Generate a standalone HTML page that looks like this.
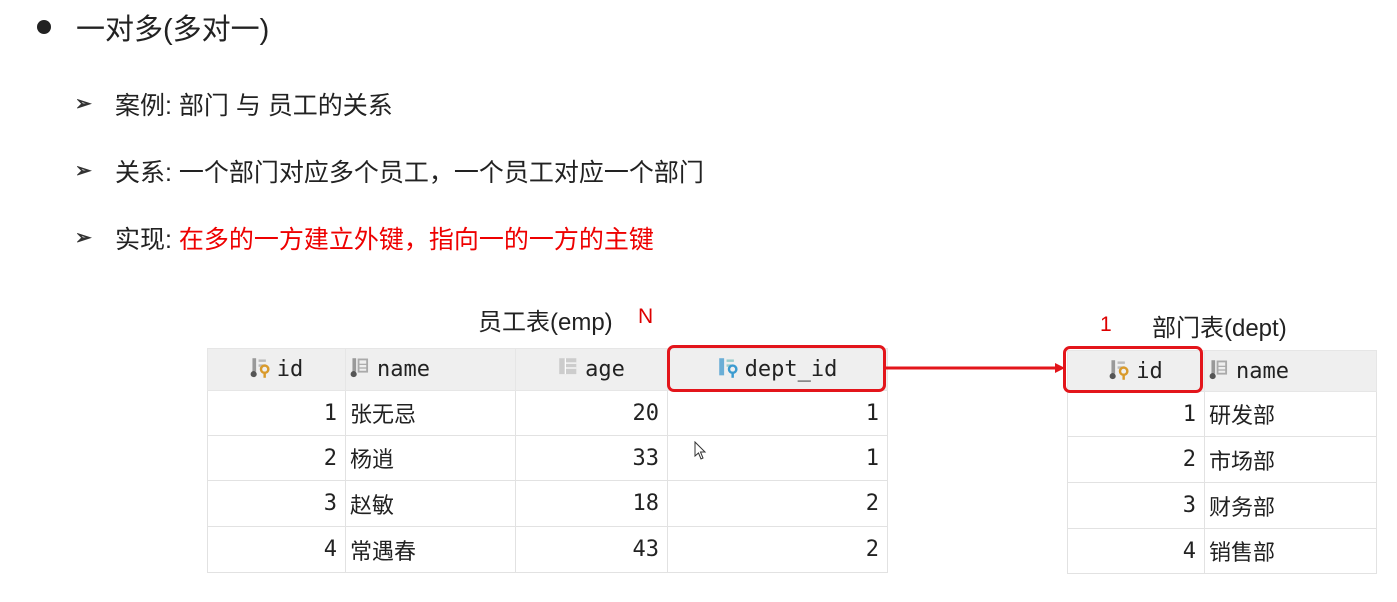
<!DOCTYPE html>
<html><head><meta charset="utf-8"><style>
body{margin:0;width:1397px;height:602px;background:#fff;position:relative;overflow:hidden;font-family:"Liberation Sans","Noto Sans CJK SC",sans-serif;color:#222}
.a{position:absolute;white-space:nowrap}
.dot{position:absolute;left:37px;top:20px;width:14px;height:14px;border-radius:50%;background:#222}
.t1{left:76px;top:6px;font-size:29px}
.sb{font-size:25px;left:115px}
.ar{font-size:20px;left:75px;color:#333;font-weight:bold}
table{position:absolute;border-collapse:collapse;table-layout:fixed;font-family:"DejaVu Sans Mono","Liberation Mono","Noto Sans CJK SC",monospace;font-size:22px;color:#222}
td{border:1px solid #e2e2e2;padding:0 8px 0 4px;overflow:hidden;white-space:nowrap}
th{background:#efefef;font-weight:normal;border:1px solid #e6e6e6;font-size:22px;white-space:nowrap;overflow:hidden}
td.n{text-align:right}
td.c{font-family:"Noto Sans CJK SC",sans-serif;font-size:22px;padding-left:4px}
.ic{display:inline-block;width:22px;height:22px;vertical-align:-3px;margin-right:5px}
.box{position:absolute;border:3px solid #e3151b;border-radius:7px}
</style></head><body>
<div class="dot"></div>
<div class="a t1">一对多(多对一)</div>
<div class="a ar" style="top:91px">➢</div><div class="a sb" style="top:86px">案例: 部门 与 员工的关系</div>
<div class="a ar" style="top:158px">➢</div><div class="a sb" style="top:153px">关系: 一个部门对应多个员工，一个员工对应一个部门</div>
<div class="a ar" style="top:225px">➢</div><div class="a sb" style="top:220px">实现: <span style="color:#e00">在多的一方建立外键，指向一的一方的主键</span></div>
<div class="a" style="left:478px;top:302px;font-size:24px">员工表(emp)</div>
<div class="a" style="left:638px;top:305px;font-size:21px;color:#d00">N</div>
<div class="a" style="left:1152px;top:308px;font-size:24px">部门表(dept)</div>
<div class="a" style="left:1100px;top:313px;font-size:21px;color:#d00">1</div>

<svg width="0" height="0" style="position:absolute"><defs>
<g id="k"><rect x="2" y="1" width="3" height="11" fill="#999"/><rect x="7" y="2" width="6" height="2" fill="#bbb"/><rect x="7" y="6" width="6" height="2" fill="#bbb"/><circle cx="3" cy="14" r="2.5" fill="#555"/><circle cx="12" cy="10" r="3" fill="none" stroke="#d99a2b" stroke-width="2"/><rect x="11" y="12" width="2" height="5" fill="#d99a2b"/></g>
<g id="c"><rect x="2" y="1" width="3" height="11" fill="#999"/><rect x="7" y="2" width="7" height="10" fill="none" stroke="#aaa" stroke-width="1.5"/><line x1="7" y1="6" x2="14" y2="6" stroke="#aaa"/><line x1="7" y1="9" x2="14" y2="9" stroke="#aaa"/><circle cx="3" cy="14" r="2.5" fill="#555"/></g>
<g id="p"><rect x="1" y="1" width="14" height="13" fill="#ccc"/><line x1="6" y1="1" x2="6" y2="14" stroke="#fff"/><line x1="6" y1="5" x2="15" y2="5" stroke="#fff"/><line x1="6" y1="9" x2="15" y2="9" stroke="#fff"/></g>
<g id="f"><rect x="1" y="1" width="4" height="14" fill="#6aaed6"/><rect x="7" y="2" width="6" height="2" fill="#9cc"/><rect x="7" y="6" width="4" height="2" fill="#9cc"/><circle cx="12" cy="10" r="3" fill="none" stroke="#3b9bd0" stroke-width="2"/><rect x="11" y="12" width="2" height="5" fill="#3b9bd0"/></g>
</defs></svg>

<table style="left:207px;top:348px;width:680px">
<colgroup><col style="width:138px"><col style="width:170px"><col style="width:152px"><col style="width:220px"></colgroup>
<tr style="height:42px"><th><svg class="ic" viewBox="0 0 18 18"><use href="#k"/></svg>id</th><th style="text-align:left;padding-left:4px"><svg class="ic" viewBox="0 0 18 18"><use href="#c"/></svg>name</th><th><svg class="ic" viewBox="0 0 18 18"><use href="#p"/></svg>age</th><th><svg class="ic" viewBox="0 0 18 18"><use href="#f"/></svg>dept_id</th></tr>
<tr style="height:45px"><td class="n">1</td><td class="c">张无忌</td><td class="n">20</td><td class="n">1</td></tr>
<tr style="height:45px"><td class="n">2</td><td class="c">杨逍</td><td class="n">33</td><td class="n">1</td></tr>
<tr style="height:46px"><td class="n">3</td><td class="c">赵敏</td><td class="n">18</td><td class="n">2</td></tr>
<tr style="height:46px"><td class="n">4</td><td class="c">常遇春</td><td class="n">43</td><td class="n">2</td></tr>
</table>

<table style="left:1067px;top:350px;width:309px">
<colgroup><col style="width:137px"><col style="width:172px"></colgroup>
<tr style="height:41px"><th><svg class="ic" viewBox="0 0 18 18"><use href="#k"/></svg>id</th><th style="text-align:left;padding-left:4px"><svg class="ic" viewBox="0 0 18 18"><use href="#c"/></svg>name</th></tr>
<tr style="height:45px"><td class="n">1</td><td class="c">研发部</td></tr>
<tr style="height:46px"><td class="n">2</td><td class="c">市场部</td></tr>
<tr style="height:46px"><td class="n">3</td><td class="c">财务部</td></tr>
<tr style="height:45px"><td class="n">4</td><td class="c">销售部</td></tr>
</table>

<div class="box" style="left:667px;top:345px;width:213px;height:41px"></div>
<div class="box" style="left:1063px;top:346px;width:134px;height:41px"></div>
<svg class="a" style="left:885px;top:360px" width="182" height="16"><line x1="0" y1="8" x2="172" y2="8" stroke="#e3151b" stroke-width="3"/><polygon points="170,3 180,8 170,13" fill="#e3151b"/></svg>
<svg class="a" style="left:694px;top:441px" width="14" height="20"><path d="M1 1 L1 15 L4.5 12 L7 18 L9 17 L6.5 11 L11 11 Z" fill="#fff" stroke="#333" stroke-width="1"/></svg>
</body></html>
